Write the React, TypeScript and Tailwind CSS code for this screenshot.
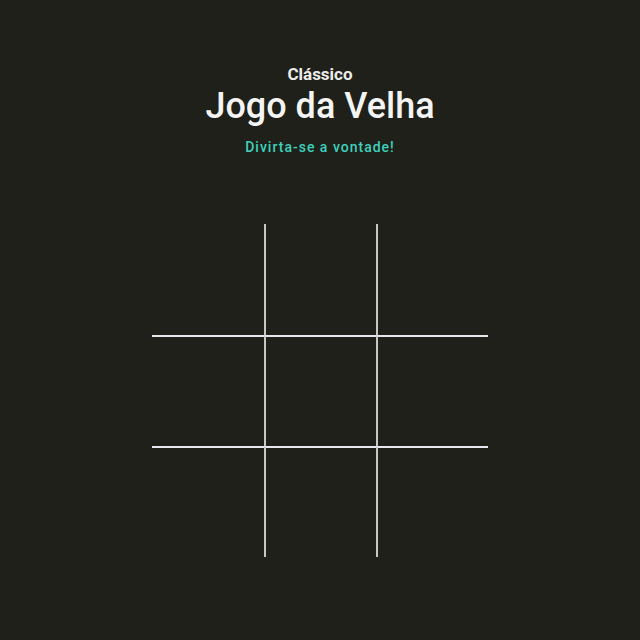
const cells = [0, 1, 2, 3, 4, 5, 6, 7, 8];

export default function App() {
  return (
    <div
      className="min-h-[640px] w-full bg-[#1e2019] flex flex-col items-center"
      style={{ fontFamily: 'Roboto, "Noto Sans", sans-serif' }}
    >
      {/* cabeçalho */}
      <header className="flex flex-col items-center pt-[64px]">
        <span className="text-[17px] font-bold leading-[20px] text-[#ececec]">Clássico</span>
        <h1 className="text-[36px] font-medium leading-[44px] text-[#f4f4f4]">Jogo da Velha</h1>
        <p className="mt-[10px] text-[14px] font-medium leading-[18px] tracking-[1px] text-[#3fd0bd]">
          Divirta-se a vontade!
        </p>
      </header>

      {/* tabuleiro */}
      <div className="mt-[68px] grid grid-cols-3">
        {cells.map((i) => (
          <div
            key={i}
            className={
              'w-[112px] h-[111px] ' +
              (i % 3 !== 0 ? 'border-l-2 border-l-[#c6c6c6] ' : '') +
              (i >= 3 ? 'border-t-2 border-t-[#e6e6ee]' : '')
            }
          />
        ))}
      </div>
    </div>
  );
}
